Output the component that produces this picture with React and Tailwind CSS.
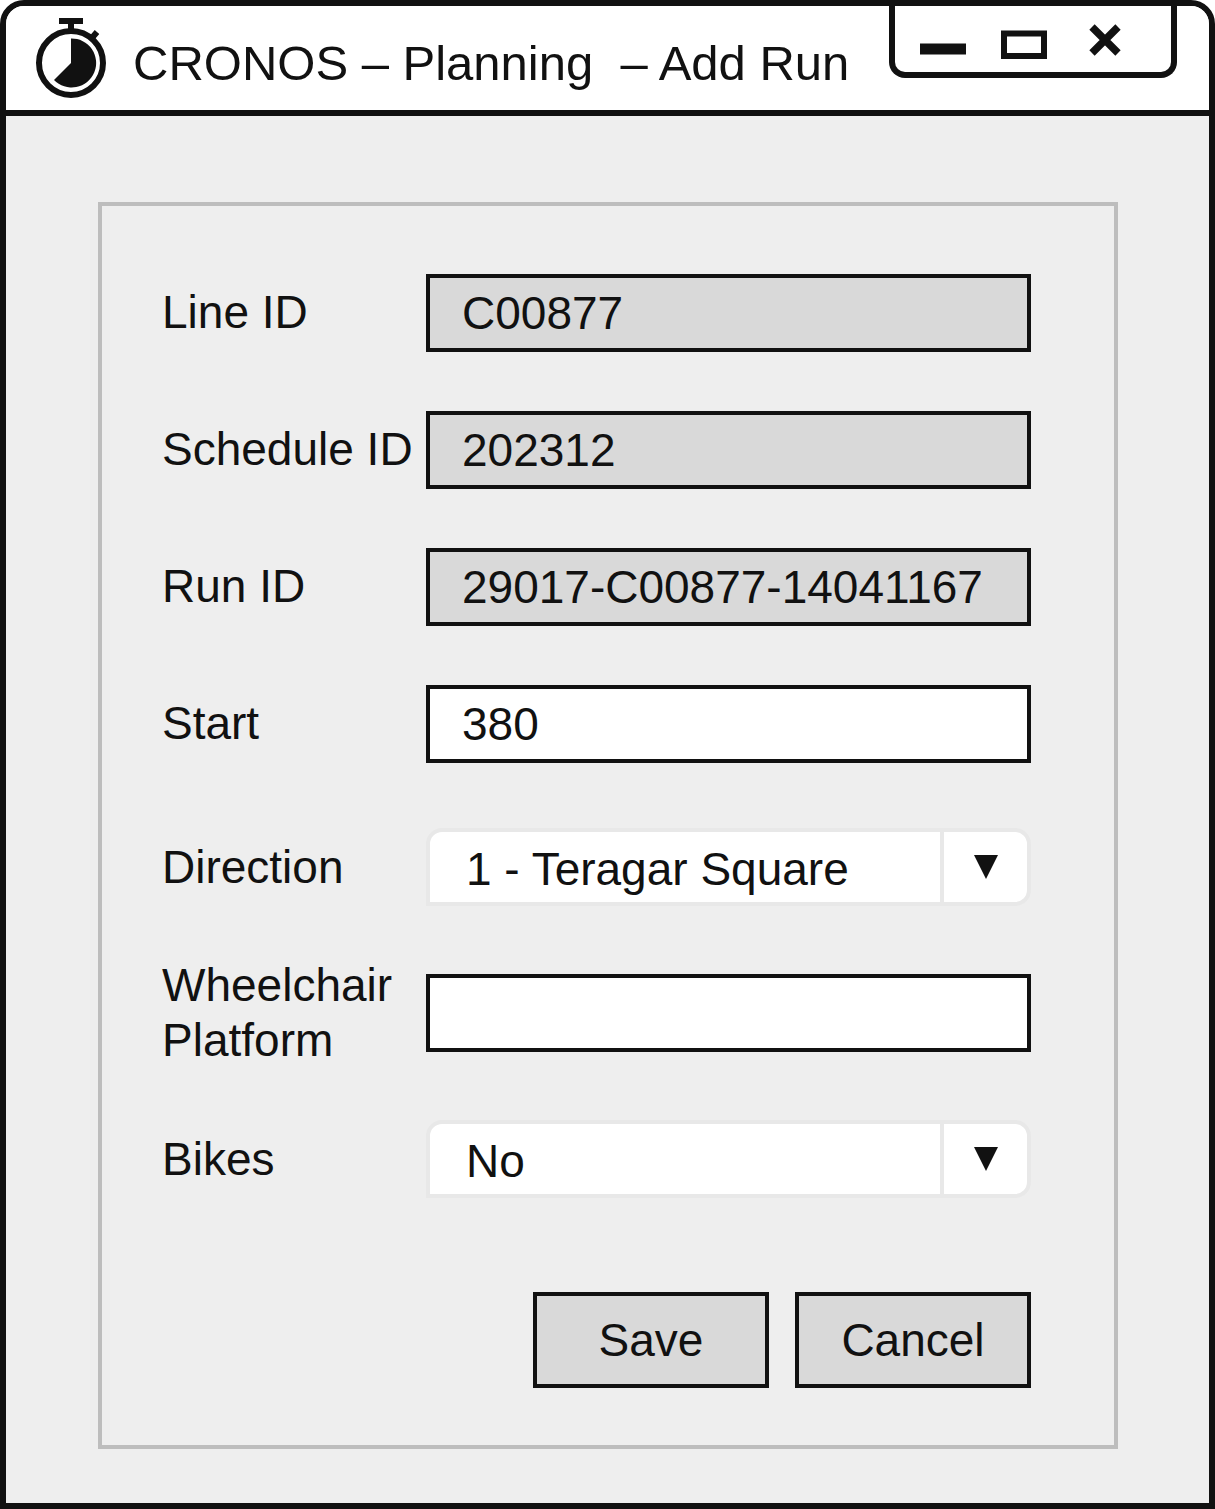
import React from "react";

const FIELD =
  "block h-[78px] w-full border-4 border-[#111] px-8 text-[46px] leading-[64px] text-[#111] outline-none";

function TextField({ id, label, value, readOnly }) {
  return (
    <>
      <label htmlFor={id}>{label}</label>
      <input
        id={id}
        type="text"
        defaultValue={value}
        readOnly={readOnly}
        className={`${FIELD} ${readOnly ? "bg-[#d9d9d9]" : "bg-white"}`}
      />
    </>
  );
}

function SelectField({ id, label, options }) {
  return (
    <>
      <label htmlFor={id}>{label}</label>
      <div className="relative h-[78px] w-full">
        <select
          id={id}
          className="block h-full w-full appearance-none rounded-2xl rounded-bl-none border-4 border-[#e8e8e8] bg-white pt-1 pl-9 text-[46px] text-[#111] outline-none"
        >
          {options.map((o) => (
            <option key={o}>{o}</option>
          ))}
        </select>
        <span className="pointer-events-none absolute inset-y-1 right-1 flex w-[87px] items-center justify-center border-l-4 border-[#e8e8e8]">
          <svg viewBox="0 0 24 24" className="size-6" aria-hidden="true">
            <path d="M0 0H24L12 24Z" fill="#111" />
          </svg>
        </span>
      </div>
    </>
  );
}

function Stopwatch() {
  return (
    <svg viewBox="0 0 72 82" className="h-[82px] w-[72px] shrink-0" aria-hidden="true">
      <circle cx="36" cy="46" r="32" fill="none" stroke="#111" strokeWidth="6" />
      <path d="M24 4H48M36 4V15M56 22L62 15" fill="none" stroke="#111" strokeWidth="6" />
      <path d="M36 21.5A24.5 24.5 0 1 1 19 63L36 46Z" fill="#111" />
    </svg>
  );
}

function WindowButton({ label, children }) {
  return (
    <button type="button" aria-label={label} className="flex w-[81px] items-center justify-center">
      <svg viewBox="0 0 46 44" className="h-11 w-[46px]" fill="none" stroke="#111" aria-hidden="true">
        {children}
      </svg>
    </button>
  );
}

export default function App() {
  return (
    <div className="flex min-h-screen flex-col overflow-hidden rounded-t-3xl border-[6px] border-[#111] bg-[#eee] font-['Liberation_Sans',Arial,sans-serif] text-[46px] text-[#111]">
      <header className="flex h-[110px] items-start justify-between border-b-[6px] border-[#111] bg-white pr-8 pl-[29px]">
        <div className="flex items-start gap-[26px] pt-[11px]">
          <Stopwatch />
          <h1 className="text-[49px] leading-[92px] whitespace-pre">CRONOS – Planning  – Add Run</h1>
        </div>
        <div className="flex h-[72px] w-[288px] shrink-0 rounded-b-2xl border-6 border-t-0 border-[#111] pl-[7px]">
          <WindowButton label="Minimize">
            <path d="M0 32H46" strokeWidth="11" />
          </WindowButton>
          <WindowButton label="Maximize">
            <path d="M3 16.5H43V39H3Z" strokeWidth="6" />
          </WindowButton>
          <WindowButton label="Close">
            <path d="M10 10L36 36M36 10L10 36" strokeWidth="7.5" />
          </WindowButton>
        </div>
      </header>
      <main className="flex-1 pt-[86px] pr-[91px] pb-[53px] pl-[92px]">
        <form
          className="border-4 border-[#bdbdbd] pt-[38px] pr-[83px] pb-[57px] pl-[60px]"
          onSubmit={(e) => e.preventDefault()}
        >
          <div className="grid grid-cols-[264px_1fr] grid-rows-[repeat(4,137px)_150px_142px_150px] items-center leading-[55px]">
            <TextField id="line" label="Line ID" value="C00877" readOnly />
            <TextField id="schedule" label="Schedule ID" value="202312" readOnly />
            <TextField id="run" label="Run ID" value="29017-C00877-14041167" readOnly />
            <TextField id="start" label="Start" value="380" />
            <SelectField id="direction" label="Direction" options={["1 - Teragar Square"]} />
            <TextField id="wheelchair" label="Wheelchair Platform" value="" />
            <SelectField id="bikes" label="Bikes" options={["No", "Yes"]} />
          </div>
          <div className="mt-[58px] flex justify-end gap-[26px]">
            <button type="submit" className="h-24 w-[236px] border-4 border-[#111] bg-[#d9d9d9]">
              Save
            </button>
            <button type="button" className="h-24 w-[236px] border-4 border-[#111] bg-[#d9d9d9]">
              Cancel
            </button>
          </div>
        </form>
      </main>
    </div>
  );
}
